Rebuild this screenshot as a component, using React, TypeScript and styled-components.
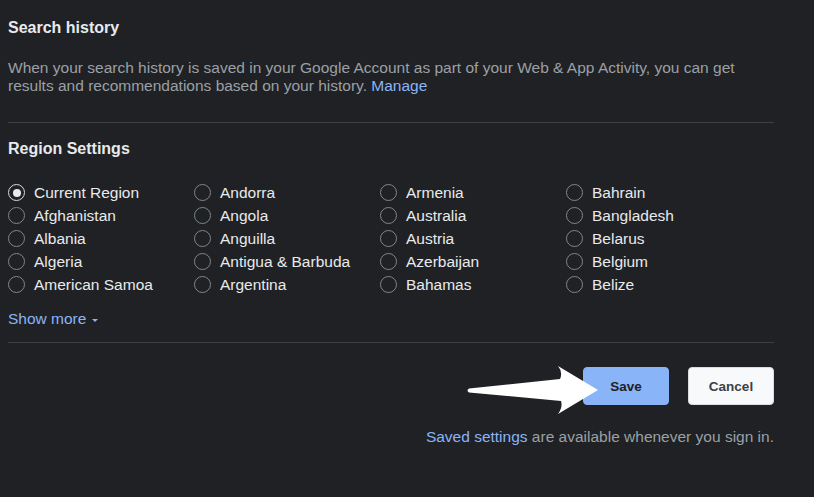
import styled, { createGlobalStyle } from "styled-components";

const GlobalStyle = createGlobalStyle`
  html, body {
    margin: 0;
    background: #202124;
  }
  body {
    font-family: Arial, "Liberation Sans", sans-serif;
  }
`;

const Page = styled.div`
  width: 766px;
  padding: 18px 40px 40px 8px;
  color: #e8eaed;
`;

const Heading = styled.h2<{ $top?: number }>`
  margin: ${(p) => p.$top ?? 0}px 0 0;
  font-size: 16px;
  line-height: 20px;
  font-weight: bold;
  color: #e8eaed;
`;

const Description = styled.p`
  margin: 21px 0 0;
  font-size: 15.5px;
  line-height: 18px;
  color: #9aa0a6;
`;

const Link = styled.a`
  color: #8ab4f8;
  text-decoration: none;
  cursor: pointer;
`;

const Divider = styled.hr<{ $top: number }>`
  margin: ${(p) => p.$top}px 0 0;
  border: none;
  height: 1px;
  background: #3c4043;
`;

const RegionGrid = styled.div`
  margin-top: 22px;
  display: grid;
  grid-template-columns: repeat(4, 186px);
  grid-template-rows: repeat(5, 23px);
  grid-auto-flow: column;
`;

const RadioLabel = styled.label`
  display: flex;
  align-items: center;
  gap: 9px;
  font-size: 15.5px;
  color: #e8eaed;
  white-space: nowrap;
  cursor: pointer;
`;

const RadioCircle = styled.span<{ $checked?: boolean }>`
  box-sizing: border-box;
  width: 17px;
  height: 17px;
  border-radius: 50%;
  border: 1.5px solid ${(p) => (p.$checked ? "#dadce0" : "#80868b")};
  display: flex;
  align-items: center;
  justify-content: center;
  flex-shrink: 0;

  &::after {
    content: "";
    width: 8px;
    height: 8px;
    border-radius: 50%;
    background: #e8eaed;
    display: ${(p) => (p.$checked ? "block" : "none")};
  }
`;

const ShowMore = styled.a`
  display: inline-flex;
  align-items: center;
  gap: 6px;
  margin-top: 13px;
  font-size: 15.5px;
  line-height: 20px;
  color: #8ab4f8;
  cursor: pointer;

  &::after {
    content: "";
    border-left: 3.5px solid transparent;
    border-right: 3.5px solid transparent;
    border-top: 3.5px solid #8ab4f8;
    margin-top: 2px;
  }
`;

const ButtonRow = styled.div`
  position: relative;
  margin-top: 24px;
  display: flex;
  justify-content: flex-end;
  gap: 19px;
`;

const Button = styled.button<{ $primary?: boolean }>`
  width: 86px;
  height: 38px;
  border-radius: 4px;
  font-family: Arial, "Liberation Sans", sans-serif;
  font-size: 13.5px;
  font-weight: bold;
  cursor: pointer;
  border: 1px solid ${(p) => (p.$primary ? "#8ab4f8" : "#dadce0")};
  background: ${(p) => (p.$primary ? "#8ab4f8" : "#f8f9fa")};
  color: ${(p) => (p.$primary ? "#202124" : "#3c4043")};
`;

const Arrow = styled.svg`
  position: absolute;
  left: 458px;
  top: -3px;
`;

const Footer = styled.p`
  margin: 22px 0 0;
  text-align: right;
  font-size: 15.5px;
  line-height: 20px;
  color: #9aa0a6;
`;

const regions = [
  "Current Region",
  "Afghanistan",
  "Albania",
  "Algeria",
  "American Samoa",
  "Andorra",
  "Angola",
  "Anguilla",
  "Antigua & Barbuda",
  "Argentina",
  "Armenia",
  "Australia",
  "Austria",
  "Azerbaijan",
  "Bahamas",
  "Bahrain",
  "Bangladesh",
  "Belarus",
  "Belgium",
  "Belize",
];

export default function App() {
  return (
    <>
      <GlobalStyle />
      <Page>
        <Heading>Search history</Heading>
        <Description>
          When your search history is saved in your Google Account as part of your Web &amp; App
          Activity, you can get results and recommendations based on your history.{" "}
          <Link>Manage</Link>
        </Description>
        <Divider $top={27} />
        <Heading $top={16}>Region Settings</Heading>
        <RegionGrid>
          {regions.map((r, i) => (
            <RadioLabel key={r}>
              <RadioCircle $checked={i === 0} />
              {r}
            </RadioLabel>
          ))}
        </RegionGrid>
        <ShowMore>Show more</ShowMore>
        <Divider $top={13} />
        <ButtonRow>
          <Button $primary>Save</Button>
          <Button>Cancel</Button>
          <Arrow width="136" height="52" viewBox="0 0 136 52">
            <path
              d="M3,24.5 L94,15 Q97,8 92,2 L132,26 L92,50 Q97,43 95,37 L3,28.5 Q0,26.5 3,24.5 Z"
              fill="#ffffff"
            />
          </Arrow>
        </ButtonRow>
        <Footer>
          <Link>Saved settings</Link> are available whenever you sign in.
        </Footer>
      </Page>
    </>
  );
}
